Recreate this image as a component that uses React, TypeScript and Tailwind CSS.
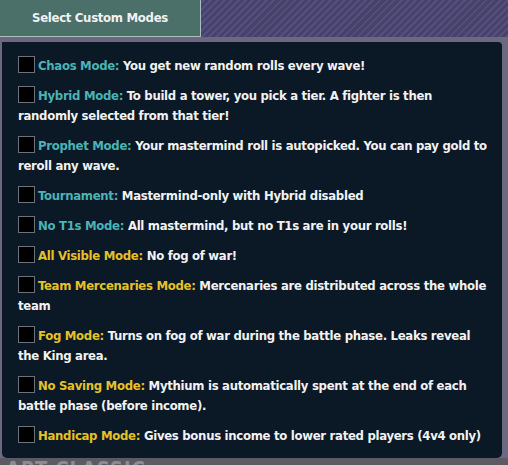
import React from "react";

const modes: { label: string; text: string; color: "teal" | "gold" }[] = [
  { label: "Chaos Mode:", text: "You get new random rolls every wave!", color: "teal" },
  { label: "Hybrid Mode:", text: "To build a tower, you pick a tier. A fighter is then randomly selected from that tier!", color: "teal" },
  { label: "Prophet Mode:", text: "Your mastermind roll is autopicked. You can pay gold to reroll any wave.", color: "teal" },
  { label: "Tournament:", text: "Mastermind-only with Hybrid disabled", color: "teal" },
  { label: "No T1s Mode:", text: "All mastermind, but no T1s are in your rolls!", color: "teal" },
  { label: "All Visible Mode:", text: "No fog of war!", color: "gold" },
  { label: "Team Mercenaries Mode:", text: "Mercenaries are distributed across the whole team", color: "gold" },
  { label: "Fog Mode:", text: "Turns on fog of war during the battle phase. Leaks reveal the King area.", color: "gold" },
  { label: "No Saving Mode:", text: "Mythium is automatically spent at the end of each battle phase (before income).", color: "gold" },
  { label: "Handicap Mode:", text: "Gives bonus income to lower rated players (4v4 only)", color: "gold" },
];

export default function App() {
  return (
    <div
      className="relative w-[508px] h-[465px] overflow-hidden bg-[repeating-linear-gradient(135deg,#47426c_0px,#47426c_3px,#554f7c_3px,#554f7c_5px)]"
      style={{ fontFamily: '"DejaVu Sans Condensed", "Liberation Sans", sans-serif' }}
    >
      <div className="flex flex-col h-full">
        <div className="flex">
          <div className="w-[201px] h-[37px] bg-[#4b6f69] border-r border-b border-[#a9bfb9] flex items-center justify-center text-[13px] font-bold tracking-[-0.3px] text-[#f2f2f2]">
            Select Custom Modes
          </div>
        </div>
        <div className="bg-[#6b6882] pt-[5px] pl-[2px] pr-[6px] pb-0 w-[508px]">
          <div className="bg-[#0b1926] rounded-b-[5px] rounded-tr-[4px] h-[416px] pl-[16px] pr-[12px] pt-[14px] flex flex-col gap-[10px]">
            {modes.map((m, i) => (
              <div key={i} className="text-[13px] leading-[20px] text-[#f2f2f2] font-bold tracking-[-0.3px]">
                <span className="inline-block align-[-3px] w-[17px] h-[17px] bg-black border border-[#6c7278] mr-[3px]" />
                <span className={m.color === "teal" ? "text-[#4cb3b5]" : "text-[#e6c128]"}>{m.label}</span>{" "}
                {m.text}
              </div>
            ))}
          </div>
        </div>
        <div className="flex-1 bg-[#5d5a64] pl-[6px] text-[20px] leading-[20px] text-[#8d8a92] font-bold tracking-wider overflow-hidden">
          ART CLASSIC
        </div>
      </div>
    </div>
  );
}
